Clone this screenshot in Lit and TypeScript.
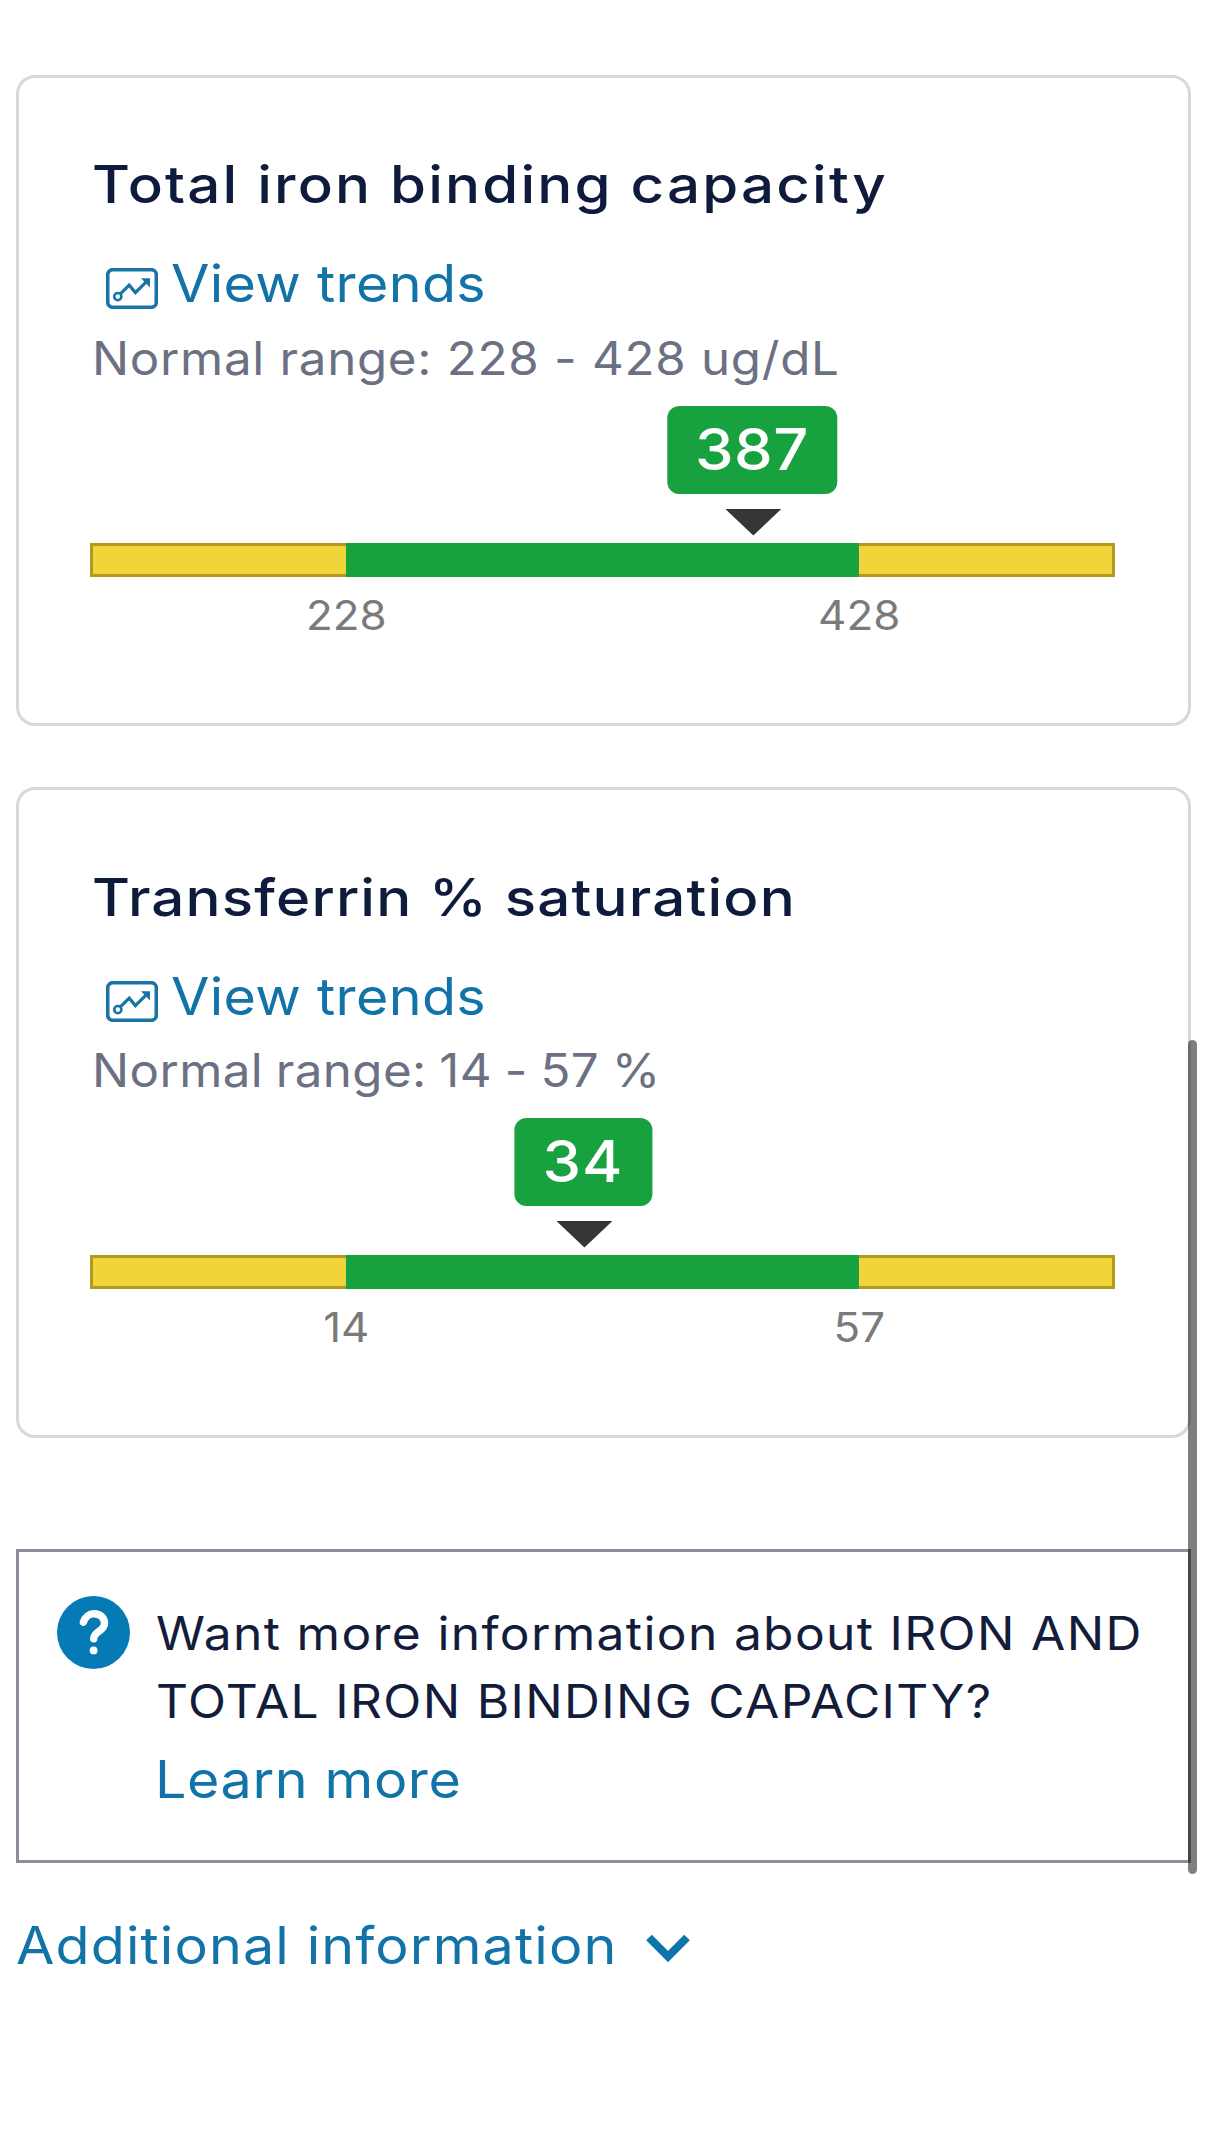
import { LitElement, html, css, svg } from "lit";
import { customElement, property } from "lit/decorators.js";
import { classMap } from "lit/directives/class-map.js";

interface Result {
  name: string;
  unit: string;
  low: number;
  high: number;
  value: number;
}

const RESULTS: Result[] = [
  { name: "Total iron binding capacity", unit: "ug/dL", low: 228, high: 428, value: 387 },
  { name: "Transferrin % saturation", unit: "%", low: 14, high: 57, value: 34 },
];

/** Bar with low, normal and high zones and a marker at the measured value. */
@customElement("range-gauge")
class RangeGauge extends LitElement {
  @property({ type: Number }) low = 0;
  @property({ type: Number }) high = 1;
  @property({ type: Number }) value = 0;

  static styles = css`
    :host {
      display: block;
      position: relative;
      padding-top: 137px;
    }
    .marker {
      position: absolute;
      top: 0;
      display: flex;
      flex-direction: column;
      align-items: center;
      gap: 15px;
      transform: translateX(-50%);
    }
    .badge {
      box-sizing: border-box;
      height: 88px;
      margin-right: 3px;
      padding: 0 32.5px;
      border-radius: 12px;
      background: #17a23f;
      color: #fff;
      font-size: 57px;
      font-weight: 500;
      line-height: 88px;
      letter-spacing: 0.4px;
    }
    .badge.short {
      letter-spacing: 1px;
      padding: 0 31.5px;
    }
    .number {
      display: inline-block;
      transform: scaleX(1.08);
    }
    .arrow {
      display: block;
      width: 56px;
      height: 27px;
      fill: #373536;
    }
    .bar {
      display: grid;
      grid-template-columns: 1fr 2fr 1fr;
      height: 34px;
    }
    .zone {
      box-sizing: border-box;
      background: #f1d439;
      border: 3px solid #b09a22;
    }
    .zone.low {
      border-right: none;
    }
    .zone.high {
      border-left: none;
    }
    .zone.normal {
      border: none;
      background: #17a23f;
    }
    .limits {
      display: grid;
      grid-template-columns: 1fr 1fr;
      margin-top: 12.5px;
      text-align: center;
      color: #7a7a7a;
      font-size: 41px;
      line-height: 52px;
    }
    .limit {
      transform: scaleX(1.07);
    }
  `;

  render() {
    const at = 25 + (50 * (this.value - this.low)) / (this.high - this.low);
    const short = String(this.value).length < 3;
    return html`
      <div class="marker" style="left: ${at}%">
        <div class=${classMap({ badge: true, short })}><span class="number">${this.value}</span></div>
        <svg class="arrow" viewBox="0 0 56 27"><path d="M0 0H56L28 26.5Z" /></svg>
      </div>
      <div class="bar">
        <div class="zone low"></div>
        <div class="zone normal"></div>
        <div class="zone high"></div>
      </div>
      <div class="limits">
        <span class="limit">${this.low}</span>
        <span class="limit">${this.high}</span>
      </div>
    `;
  }
}

const trendIcon = svg`
  <rect x="1.7" y="1.7" width="48.6" height="37.6" rx="5" stroke-width="3.6" />
  <circle cx="11.8" cy="28.6" r="3.6" stroke-width="2.6" />
  <path d="M14.6 25.6L23.2 17.2L29.4 24.6L40.5 13.6" stroke-width="3.2" />
  <path class="tip" d="M35 10.3H44V19.4Z" />
`;

@customElement("app-root")
class AppRoot extends LitElement {
  static styles = css`
    :host {
      display: block;
      box-sizing: border-box;
      position: relative;
      height: 2148px;
      padding: 75px 15px 0 16px;
      overflow: hidden;
      background: #fff;
      font-family: Inter, "Liberation Sans", sans-serif;
      font-weight: 400;
      white-space: nowrap;
    }
    .cards {
      display: flex;
      flex-direction: column;
      gap: 61px;
    }
    .card {
      box-sizing: border-box;
      height: 651px;
      padding: 74px 73px 0 71px;
      border: 3px solid #d6d8da;
      border-radius: 19px;
    }
    .name {
      margin: 0 0 0 2px;
      color: #0f1b3d;
      font-size: 52px;
      font-weight: 500;
      line-height: 66px;
      letter-spacing: 1.96px;
      transform: scaleX(1.12);
      transform-origin: left;
    }
    .name.compact {
      margin-top: 1px;
      letter-spacing: 1.05px;
    }
    .link {
      color: #1273a8;
      font-size: 52px;
      line-height: 66px;
      text-decoration: none;
    }
    .link-text {
      display: inline-block;
      transform: scaleX(1.07);
      transform-origin: left;
    }
    .trends {
      display: flex;
      align-items: flex-start;
      gap: 13px;
      margin: 32.5px 0 0 16px;
      letter-spacing: 0.3px;
    }
    .trend-icon {
      width: 52px;
      height: 41px;
      margin-top: 17px;
      fill: none;
      stroke: #1a73a5;
    }
    .trend-icon .tip {
      fill: #1a73a5;
      stroke: none;
    }
    .range {
      margin: 12.5px 0 18.5px 2px;
      color: #6b7182;
      font-size: 46px;
      line-height: 58px;
      letter-spacing: 0.68px;
      transform: scaleX(1.07);
      transform-origin: left;
    }
    .range.compact {
      margin-top: 11.5px;
      letter-spacing: 0.4px;
      word-spacing: -1.5px;
    }
    .info {
      box-sizing: border-box;
      display: flex;
      align-items: flex-start;
      gap: 26px;
      height: 314px;
      margin-top: 111px;
      padding: 44px 0 0 38px;
      border: 3px solid #8b8d99;
    }
    .help {
      flex: none;
      width: 73px;
      height: 73px;
    }
    .body {
      padding-top: 3px;
    }
    .question {
      margin: 0 0 12px;
      color: #131d3b;
      font-size: 46px;
      line-height: 68px;
      letter-spacing: 1.24px;
      transform: scaleX(1.08);
      transform-origin: left;
    }
    .learn {
      display: block;
      margin-left: -1px;
      letter-spacing: 0.55px;
    }
    .more {
      display: flex;
      align-items: flex-start;
      gap: 68px;
      margin-top: 50px;
      letter-spacing: 1.05px;
    }
    .chevron {
      width: 44px;
      height: 28px;
      margin-top: 21px;
      fill: none;
      stroke: #0b74ab;
      stroke-width: 8;
    }
    .scrollbar {
      position: absolute;
      top: 1040px;
      right: 9px;
      width: 9px;
      height: 834px;
      border-radius: 5px;
      background: rgba(0, 0, 0, 0.5);
    }
  `;

  private card(r: Result) {
    const compact = r.unit === "%";
    return html`
      <section class="card">
        <h2 class=${classMap({ name: true, compact })}>${r.name}</h2>
        <a class="link trends">
          <svg class="trend-icon" viewBox="0 0 52 41">${trendIcon}</svg>
          <span class="link-text">View trends</span>
        </a>
        <p class=${classMap({ range: true, compact })}>Normal range: ${r.low} - ${r.high} ${r.unit}</p>
        <range-gauge .low=${r.low} .high=${r.high} .value=${r.value}></range-gauge>
      </section>
    `;
  }

  render() {
    return html`
      <div class="cards">${RESULTS.map((r) => this.card(r))}</div>
      <section class="info">
        <svg class="help" viewBox="0 0 73 73">
          <circle cx="36.5" cy="36.5" r="36.5" fill="#067ab5" />
          <path
            d="M26.4 26.2C28 21 32 17.8 37 17.8C43.2 17.8 47.5 22 47.5 27.4C47.5 35 36.7 35.5 36.7 42.8"
            fill="none"
            stroke="#fff"
            stroke-width="7.4"
            stroke-linecap="round"
          />
          <circle cx="36.6" cy="54.4" r="3.9" fill="#fff" />
        </svg>
        <div class="body">
          <p class="question">Want more information about IRON AND<br />TOTAL IRON BINDING CAPACITY?</p>
          <a class="link learn"><span class="link-text">Learn more</span></a>
        </div>
      </section>
      <a class="link more">
        <span class="link-text">Additional information</span>
        <svg class="chevron" viewBox="0 0 44 28"><path d="M3 3.5L22 22.5L41 3.5" /></svg>
      </a>
      <div class="scrollbar"></div>
    `;
  }
}
